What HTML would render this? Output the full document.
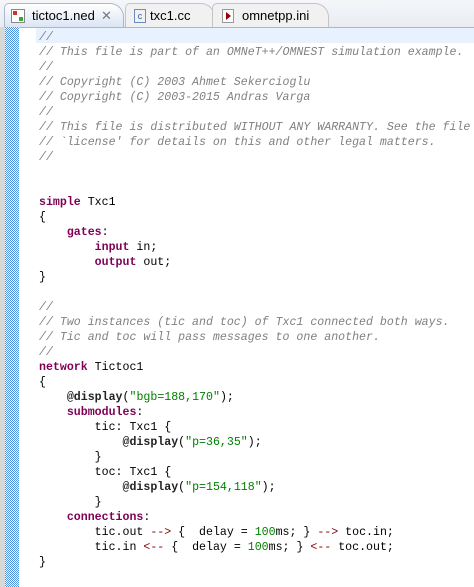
<!DOCTYPE html><html><head><style>
body{margin:0;width:474px;height:587px;overflow:hidden;background:#fff;font-family:"Liberation Sans",sans-serif;position:relative}
.tabs{position:absolute;left:0;top:0;width:474px;height:27px;background:linear-gradient(#f4f6fa,#e8ecf2);border-bottom:1px solid #a9b8cf}
.tab{position:absolute;top:3px;height:23px;font-size:13px;line-height:23px;color:#000}
.t1{left:4px;width:118px;background:linear-gradient(#fff,#dbe5f3);border:1px solid #a9b8cf;border-bottom:none;border-radius:5px 14px 0 0}
.t2{left:125px;width:88px;border:1px solid #c4c4c4;border-bottom:none;border-radius:5px 14px 0 0;background:#f1f1f1}
.t3{left:212px;width:115px;border:1px solid #c4c4c4;border-bottom:none;border-radius:5px 14px 0 0;background:#f1f1f1}
.ruler{position:absolute;left:5px;top:27px;width:14px;height:560px;background-color:#4a8fe0;background-image:linear-gradient(45deg,#fff 25%,transparent 25%,transparent 75%,#fff 75%),linear-gradient(45deg,#fff 25%,transparent 25%,transparent 75%,#fff 75%);background-size:2px 2px;background-position:0 0,1px 1px}
.lg{position:absolute;left:0;top:27px;width:5px;height:560px;background:#d8d8d8}
.hl{position:absolute;left:36px;top:28px;width:438px;height:15px;background:#e8f2fe}
pre{position:absolute;left:39px;top:30px;margin:0;font-family:"Liberation Mono",monospace;font-size:11.6px;line-height:15px;color:#000}
.c{color:#808080;font-style:italic}.k{color:#7f0055;font-weight:bold}.s{color:#008000}.b{font-weight:bold;color:#222}.a{color:#800000}
</style></head><body>
<div class="tabs">
<div class="tab t1"><span style="position:absolute;left:6px;top:5px;width:12px;height:12px;border:1px solid #888;background:#fff"><span style="position:absolute;left:1px;top:1px;width:4px;height:4px;background:#c33"></span><span style="position:absolute;right:1px;bottom:1px;width:4px;height:4px;background:#3a3"></span></span><span style="position:absolute;left:27px">tictoc1.ned</span><span style="position:absolute;left:96px;color:#777">✕</span></div>
<div class="tab t2"><span style="position:absolute;left:8px;top:5px;width:10px;height:12px;border:1px solid #6b8dbd;font-size:9px;line-height:12px;color:#2a5aa0;text-align:center">c</span><span style="position:absolute;left:24px">txc1.cc</span></div>
<div class="tab t3"><span style="position:absolute;left:9px;top:5px;width:10px;height:12px;border:1px solid #999;background:#fff"><span style="position:absolute;left:3px;top:2px;border-left:5px solid #900;border-top:4px solid transparent;border-bottom:4px solid transparent"></span></span><span style="position:absolute;left:29px">omnetpp.ini</span></div>
</div>
<div class="lg"></div><div class="ruler"></div><div class="hl"></div>
<pre><span class="c">//
// This file is part of an OMNeT++/OMNEST simulation example.
//
// Copyright (C) 2003 Ahmet Sekercioglu
// Copyright (C) 2003-2015 Andras Varga
//
// This file is distributed WITHOUT ANY WARRANTY. See the file
// `license' for details on this and other legal matters.
//</span>


<span class="k">simple</span> Txc1
{
    <span class="k">gates</span>:
        <span class="k">input</span> in;
        <span class="k">output</span> out;
}

<span class="c">//
// Two instances (tic and toc) of Txc1 connected both ways.
// Tic and toc will pass messages to one another.
//</span>
<span class="k">network</span> Tictoc1
{
    <span class="b">@display</span>(<span class="s">"bgb=188,170"</span>);
    <span class="k">submodules</span>:
        tic: Txc1 {
            <span class="b">@display</span>(<span class="s">"p=36,35"</span>);
        }
        toc: Txc1 {
            <span class="b">@display</span>(<span class="s">"p=154,118"</span>);
        }
    <span class="k">connections</span>:
        tic.out <span class="a">--&gt;</span> {  delay = <span class="s">100</span>ms; } <span class="a">--&gt;</span> toc.in;
        tic.in <span class="a">&lt;--</span> {  delay = <span class="s">100</span>ms; } <span class="a">&lt;--</span> toc.out;
}</pre>
</body></html>
